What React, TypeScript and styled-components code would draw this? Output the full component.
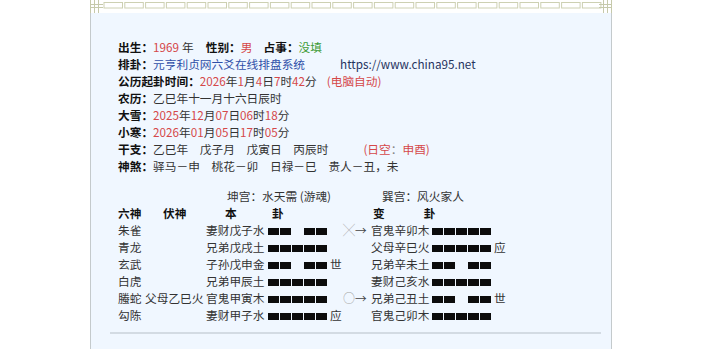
import React from "react";
import styled, { createGlobalStyle } from "styled-components";

const GlobalStyle = createGlobalStyle`
    html, body {
        margin: 0;
        padding: 0;
        background: #ffffff;
        overflow: hidden;
    }
    body {
        font-family: "Noto Sans CJK SC", "Noto Sans", sans-serif;
        font-size: 11.7px;
        color: #333;
    }
`

const Page = styled.div`
    padding-left: 90px;
    height: 349px;
`

const Panel = styled.div`
    width: 522px;
    min-height: 380px;
    display: flex;
    flex-direction: column;
`

const TopBand = styled.div`
    height: 13px;
    background: #ffffff;
    display: flex;
`

const Body = styled.div`
    flex: 1;
    background: #f0f7ff;
    border-left: 1px solid #c4cacc;
    border-right: 1px solid #c4cacc;
    padding: 25px 0 0 27px;
`

const Line = styled.div`
    height: 17px;
    line-height: 17px;
    white-space: nowrap;
    display: flex;
`

const Label = styled.b`
    color: #111;
    font-weight: 700;
`

const Tx = styled.span<{ $c?: string; $ml?: number }>`
    color: ${p => p.$c || "#333"};
    margin-left: ${p => p.$ml || 0}px;
`

const RED = "#d5484a";
const BLUE = "#2f4fa8";
const GREEN = "#3c9a34";
const NAVY = "#26335e";

const Table = styled.div`
    margin-top: 13px;
    display: grid;
    grid-template-columns: 27px 61px 62px 62px 13px 28px 61px 62px 20px;
    grid-auto-rows: 17px;
    line-height: 17px;
    white-space: nowrap;
`

const Cell = styled.div<{ $pl?: number; $span?: string }>`
    padding-left: ${p => p.$pl || 0}px;
    grid-column: ${p => p.$span || "auto"};
    display: flex;
    align-items: center;
`

const Head = styled(Cell)`
    font-weight: 700;
    color: #111;
`

const BarWrap = styled.div`
    display: flex;
    gap: 1px;
    margin-top: 3px;
`

const Seg = styled.div<{ $on: boolean }>`
    width: 11px;
    height: 7px;
    background: ${p => (p.$on ? "#0c0c0c" : "transparent")};
`

const Mark = styled.span`
    color: #a5a5a5;
    font-size: 12px;
`

const Arrow = styled.span`
    color: #444;
`

const Rule = styled.div`
    margin: 9px 10px 0 -8px;
    height: 2px;
    background: #d3dbe3;
`

const Footer = styled.div`
    margin-top: 12px;
    line-height: 17px;
    color: #777;
`

const Bar: React.FC<{ yin?: boolean }> = ({ yin }) => (
    <BarWrap>
        {[0, 1, 2, 3, 4].map(i => (
            <Seg key={i} $on={!(yin && i === 2)} />
        ))}
    </BarWrap>
);

const Band: React.FC = () => (
    <svg width="522" height="13" viewBox="0 0 522 13">
        {Array.from({ length: 24 }).map((_, i) => (
            <rect key={i} x={14 + i * 20.8} y={2.5} width={18.5} height={5.5} fill="none" stroke="#cdd0b2" strokeWidth="1" />
        ))}
        <g stroke="#c6c9ab" fill="none" strokeWidth="1">
            <path d="M0.5 13 V0 M4.5 13 V0 M8.5 13 V0 M0 4.5 H13 M0 7.5 H13" />
            <path d="M521.5 13 V0 M517.5 13 V0 M513.5 13 V0 M509 4.5 H522 M509 7.5 H522" />
        </g>
    </svg>
);

interface Yao {
    god: string;
    fu?: string;
    ben: string;
    benYin: boolean;
    benMark?: string;
    move?: string;
    bian: string;
    bianYin: boolean;
    bianMark?: string;
}

const rows: Yao[] = [
    { god: "朱雀", ben: "妻财戊子水", benYin: true, move: "╳", bian: "官鬼辛卯木", bianYin: false },
    { god: "青龙", ben: "兄弟戊戌土", benYin: false, bian: "父母辛巳火", bianYin: false, bianMark: "应" },
    { god: "玄武", ben: "子孙戊申金", benYin: true, benMark: "世", bian: "兄弟辛未土", bianYin: true },
    { god: "白虎", ben: "兄弟甲辰土", benYin: false, bian: "妻财己亥水", bianYin: false },
    { god: "螣蛇", fu: "父母乙巳火", ben: "官鬼甲寅木", benYin: false, move: "○", bian: "兄弟己丑土", bianYin: true, bianMark: "世" },
    { god: "勾陈", ben: "妻财甲子水", benYin: false, benMark: "应", bian: "官鬼己卯木", bianYin: false },
];

const App: React.FC = () => {
    return (
        <>
            <GlobalStyle />
            <Page>
                <Panel>
                    <TopBand>
                        <Band />
                    </TopBand>
                    <Body>
                        <Line>
                            <Label>出生：</Label>
                            <Tx $c={RED}>1969</Tx>
                            <Tx $ml={3}>年</Tx>
                            <Label style={{ marginLeft: 12 }}>性别：</Label>
                            <Tx $c={RED}>男</Tx>
                            <Label style={{ marginLeft: 11 }}>占事：</Label>
                            <Tx $c={GREEN}>没填</Tx>
                        </Line>
                        <Line>
                            <Label>排卦：</Label>
                            <Tx $c={BLUE}>元亨利贞网六爻在线排盘系统</Tx>
                            <Tx $c={NAVY} $ml={35}>https://www.china95.net</Tx>
                        </Line>
                        <Line>
                            <Label>公历起卦时间：</Label>
                            <Tx $c={RED}>2026</Tx><Tx>年</Tx>
                            <Tx $c={RED}>1</Tx><Tx>月</Tx>
                            <Tx $c={RED}>4</Tx><Tx>日</Tx>
                            <Tx $c={RED}>7</Tx><Tx>时</Tx>
                            <Tx $c={RED}>42</Tx><Tx>分</Tx>
                            <Tx $c={RED} $ml={10}>(电脑自动)</Tx>
                        </Line>
                        <Line>
                            <Label>农历：</Label>
                            <Tx>乙巳年十一月十六日辰时</Tx>
                        </Line>
                        <Line>
                            <Label>大雪：</Label>
                            <Tx $c={RED}>2025</Tx><Tx>年</Tx>
                            <Tx $c={RED}>12</Tx><Tx>月</Tx>
                            <Tx $c={RED}>07</Tx><Tx>日</Tx>
                            <Tx $c={RED}>06</Tx><Tx>时</Tx>
                            <Tx $c={RED}>18</Tx><Tx>分</Tx>
                        </Line>
                        <Line>
                            <Label>小寒：</Label>
                            <Tx $c={RED}>2026</Tx><Tx>年</Tx>
                            <Tx $c={RED}>01</Tx><Tx>月</Tx>
                            <Tx $c={RED}>05</Tx><Tx>日</Tx>
                            <Tx $c={RED}>17</Tx><Tx>时</Tx>
                            <Tx $c={RED}>05</Tx><Tx>分</Tx>
                        </Line>
                        <Line>
                            <Label>干支：</Label>
                            <Tx>乙巳年　戊子月　戊寅日　丙辰时</Tx>
                            <Tx $c={RED} $ml={35}>(日空</Tx>
                            <Tx $c="#888">：</Tx>
                            <Tx $c={RED}>申酉)</Tx>
                        </Line>
                        <Line>
                            <Label>神煞：</Label>
                            <Tx>驿马－申　桃花－卯　日禄－巳　贵人－丑，未</Tx>
                        </Line>

                        <Table>
                            <Cell $span="3 / 7" $pl={21}>坤宫：水天需 (游魂)</Cell>
                            <Cell $span="7 / 10" $pl={11}>巽宫：风火家人</Cell>

                            <Head>六神</Head>
                            <Head $pl={18}>伏神</Head>
                            <Head $pl={19}>本</Head>
                            <Head $pl={4}>卦</Head>
                            <Head />
                            <Head />
                            <Head $span="7 / 10" $pl={2}>变<span style={{ marginLeft: 39 }}>卦</span></Head>

                            {rows.map(r => (
                                <React.Fragment key={r.god}>
                                    <Cell>{r.god}</Cell>
                                    <Cell>{r.fu || ""}</Cell>
                                    <Cell>{r.ben}</Cell>
                                    <Cell><Bar yin={r.benYin} /></Cell>
                                    <Cell>{r.benMark || ""}</Cell>
                                    <Cell>
                                        {r.move && (
                                            <>
                                                <Mark>{r.move}</Mark>
                                                <Arrow>→</Arrow>
                                            </>
                                        )}
                                    </Cell>
                                    <Cell>{r.bian}</Cell>
                                    <Cell><Bar yin={r.bianYin} /></Cell>
                                    <Cell>{r.bianMark || ""}</Cell>
                                </React.Fragment>
                            ))}
                        </Table>

                        <Rule />
                        <Footer>卦身：子孙　　世身：兄弟己丑土</Footer>
                    </Body>
                </Panel>
            </Page>
        </>
    );
};

export default App;
